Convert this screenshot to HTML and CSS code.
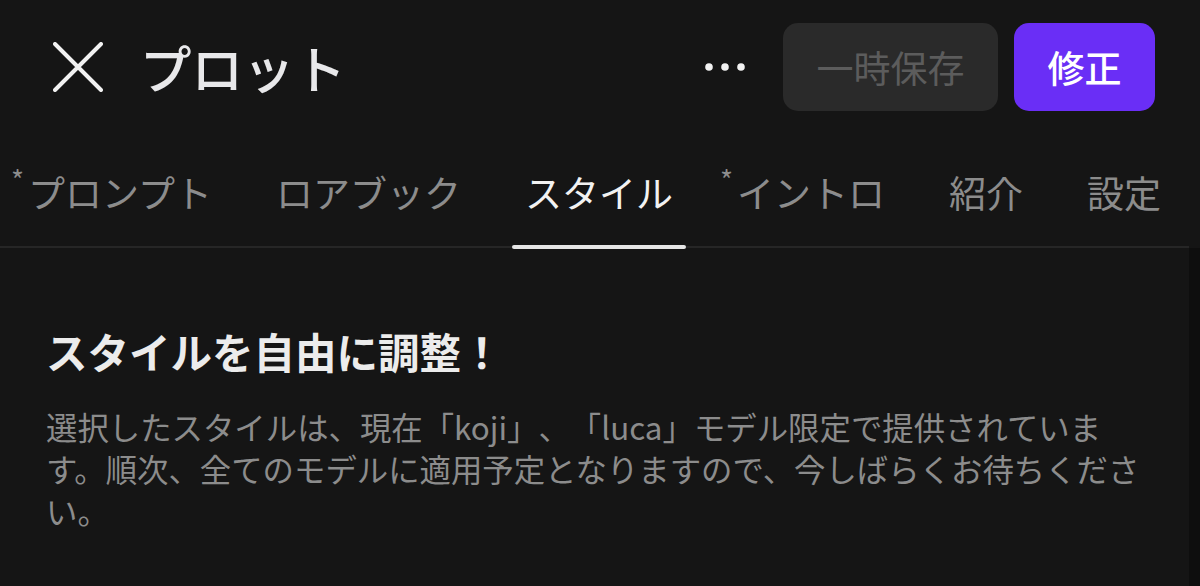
FILE: index.html
```html
<!DOCTYPE html>
<html lang="ja">
<head>
    <meta charset="UTF-8">
    <meta name="viewport" content="width=device-width, initial-scale=1.0">
    <title>プロット</title>
    <link rel="stylesheet" href="styles.css">
</head>
<body>
    <div class="app">
        <header class="topbar">
            <button class="close-btn" aria-label="閉じる">
                <svg width="50" height="50" viewBox="0 0 50 50">
                    <path d="M2 2 L48 48 M48 2 L2 48" stroke="#f2f2f2" stroke-width="4" stroke-linecap="round" fill="none"/>
                </svg>
            </button>
            <h1 class="title">プロット</h1>
            <button class="more-btn" aria-label="その他">
                <svg width="40" height="10" viewBox="0 0 40 10">
                    <circle cx="4" cy="5" r="3.8" fill="#f2f2f2"/>
                    <circle cx="20" cy="5" r="3.8" fill="#f2f2f2"/>
                    <circle cx="36" cy="5" r="3.8" fill="#f2f2f2"/>
                </svg>
            </button>
            <button class="btn btn-save">一時保存</button>
            <button class="btn btn-fix">修正</button>
        </header>

        <nav class="tabs">
            <div class="tab"><span class="req">*</span>プロンプト</div>
            <div class="tab">ロアブック</div>
            <div class="tab active">スタイル</div>
            <div class="tab"><span class="req">*</span>イントロ</div>
            <div class="tab">紹介</div>
            <div class="tab">設定</div>
        </nav>

        <div class="scroll">
            <main class="content">
                <h2 class="heading">スタイルを自由に調整！</h2>
                <p class="desc">選択したスタイルは、現在「koji」、「luca」モデル限定で提供されています。順次、全てのモデルに適用予定となりますので、今しばらくお待ちください。</p>
            </main>
            <div class="scroll-track"></div>
        </div>
    </div>
</body>
</html>
```

FILE: styles.css
```css
body {
    margin: 0;
    background-color: #151515;
    font-family: "Noto Sans CJK JP", "Noto Sans", sans-serif;
    color: #e8e8ea;
    overflow: hidden;
}
.app {
    height: 586px;
    display: flex;
    flex-direction: column;
}
.topbar {
    display: flex;
    align-items: center;
    padding: 23px 45px 0 53px;
    height: 88px;
}
.close-btn,
.more-btn {
    background: none;
    border: none;
    padding: 0;
    display: flex;
    cursor: pointer;
}
.title {
    flex: 1;
    margin: 0 0 0 37px;
    font-size: 51.5px;
    font-weight: 500;
    line-height: 1;
    color: #e8e8ea;
}
.more-btn {
    margin-right: 38px;
}
.btn {
    height: 88px;
    padding: 0 33.5px;
    font-family: inherit;
    font-size: 37px;
    border: none;
    border-radius: 15px;
    cursor: pointer;
}
.btn-save {
    background-color: #2a2a2a;
    color: #5c5c5c;
    margin-right: 16px;
}
.btn-fix {
    background-color: #6a2ef6;
    color: #fff;
    font-weight: 500;
}
.tabs {
    display: flex;
    gap: 38px;
    margin: 55px 11px 0 0;
    padding-left: 15px;
    border-bottom: 2px solid #262626;
}
.tab {
    position: relative;
    padding: 0 13px 28px;
    font-size: 37px;
    line-height: 52px;
    color: #8c8c8c;
    white-space: nowrap;
}
.tab .req {
    position: absolute;
    left: -4px;
    top: -1px;
    font-size: 28px;
    line-height: 28px;
    color: #8c8c8c;
}
.tab.active {
    color: #f2f2f2;
}
.tab.active::after {
    content: "";
    position: absolute;
    left: 0;
    right: 0;
    bottom: -3px;
    height: 4px;
    border-radius: 2px;
    background-color: #e6e6e6;
}
.scroll {
    flex: 1;
    display: flex;
}
.content {
    flex: 1;
    padding: 74px 37px 0 46px;
}
.scroll-track {
    width: 11px;
    background-color: #0e0e0e;
}
.heading {
    margin: 0;
    font-size: 41.5px;
    font-weight: 700;
    line-height: 58px;
    color: #ececec;
}
.desc {
    margin: 26px 0 0;
    font-size: 31.4px;
    line-height: 42px;
    color: #8c8c8c;
    text-spacing-trim: space-all;
}
```
